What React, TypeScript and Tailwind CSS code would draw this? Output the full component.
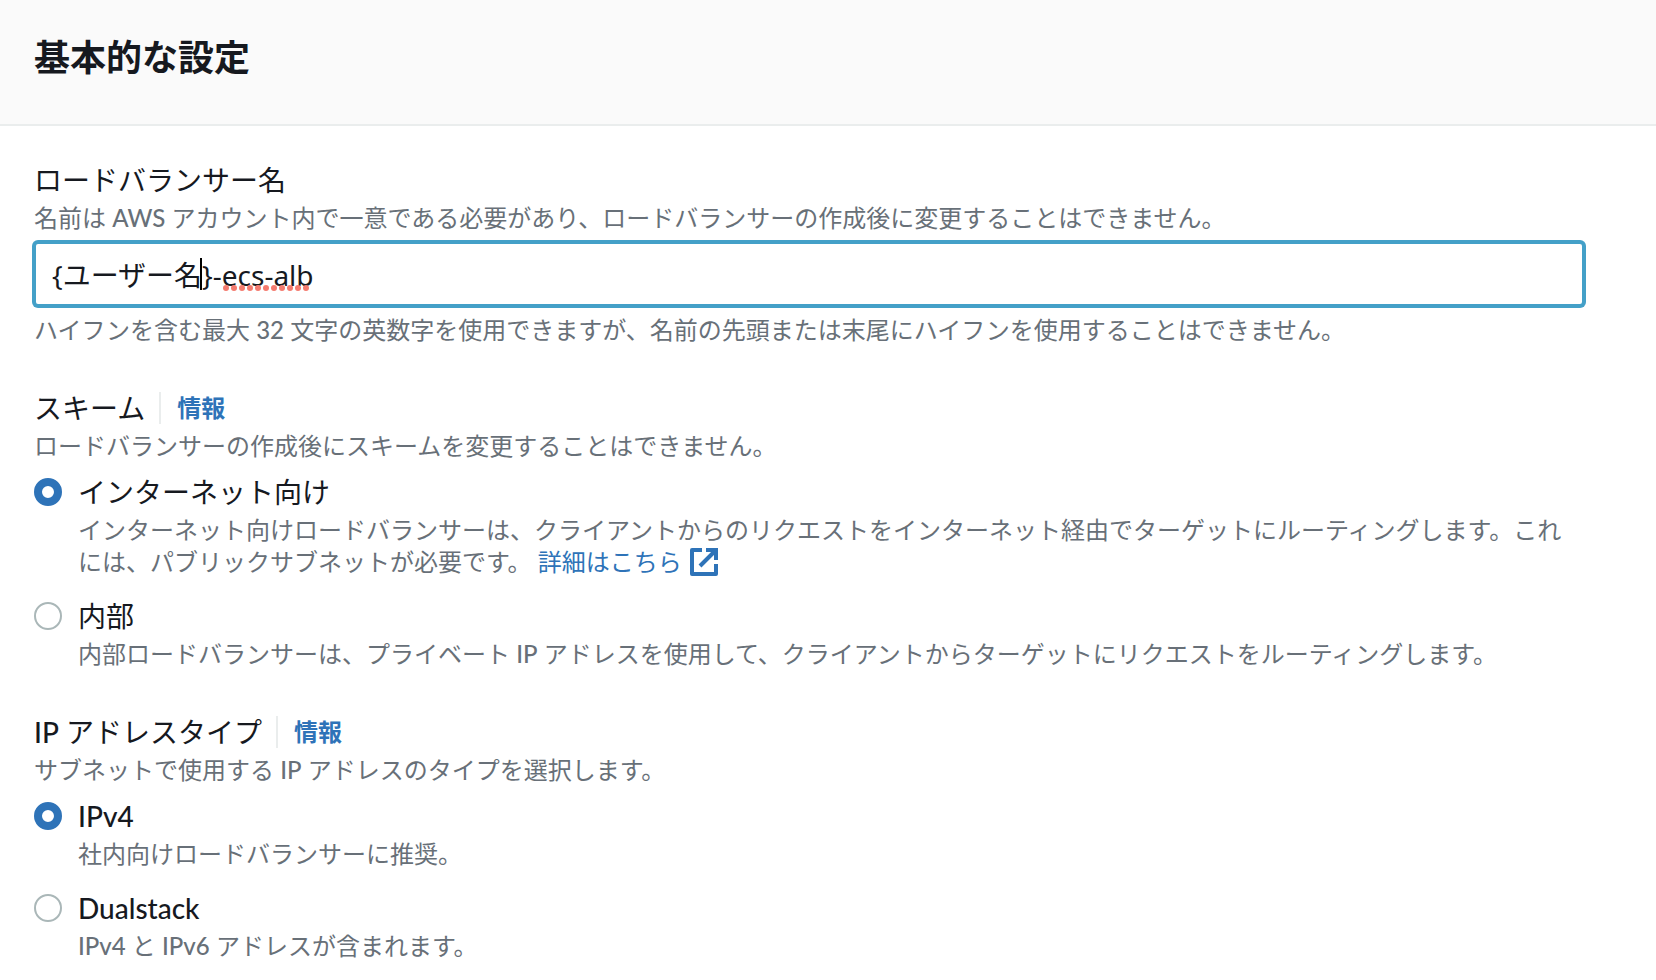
import React, { useState } from "react";

type RadioOption = {
  value: string;
  label: React.ReactNode;
  description: React.ReactNode;
};

// Latin runs are set one step heavier than the Japanese text around them
function Latin({ children }: { children: React.ReactNode }) {
  return <span className="font-medium">{children}</span>;
}

function ExternalIcon() {
  return (
    <svg viewBox="0 0 28 28" aria-hidden="true" className="inline-block w-7 h-7 my-0.5 ml-2 align-top" fill="none">
      <path d="M12 2H2V26H26V16" stroke="currentColor" strokeWidth="4" strokeLinejoin="round" />
      <path d="M16 2H26V12" stroke="currentColor" strokeWidth="4" />
      <path d="M10 18L25 3" stroke="currentColor" strokeWidth="4" />
    </svg>
  );
}

const schemeOptions: RadioOption[] = [
  {
    value: "internet-facing",
    label: "インターネット向け",
    description: (
      <>
        インターネット向けロードバランサーは、クライアントからのリクエストをインターネット経由でターゲットにルーティングします。これには、パブリックサブネットが必要です。{" "}
        <a href="#learn-more" className="text-[#2e73b8] whitespace-nowrap">
          詳細はこちら
          <ExternalIcon />
        </a>
      </>
    ),
  },
  {
    value: "internal",
    label: "内部",
    description: (
      <>
        内部ロードバランサーは、プライベート <Latin>IP</Latin>{" "}
        アドレスを使用して、クライアントからターゲットにリクエストをルーティングします。
      </>
    ),
  },
];

const ipOptions: RadioOption[] = [
  {
    value: "ipv4",
    label: <Latin>IPv4</Latin>,
    description: "社内向けロードバランサーに推奨。",
  },
  {
    value: "dualstack",
    label: <Latin>Dualstack</Latin>,
    description: (
      <>
        <Latin>IPv4</Latin> と <Latin>IPv6</Latin> アドレスが含まれます。
      </>
    ),
  },
];

function RadioField({
  name,
  title,
  hint,
  options,
  initial,
}: {
  name: string;
  title: React.ReactNode;
  hint: React.ReactNode;
  options: RadioOption[];
  initial: string;
}) {
  const [selected, setSelected] = useState(initial);

  return (
    <fieldset>
      <legend className="flex items-center text-[28px] leading-[44px] text-[#16191f]">
        <span>{title}</span>
        <span className="ml-3.5 h-8 border-l-2 border-[#eaeded] pl-4 flex items-center">
          <a href={`#${name}-info`} className="text-2xl leading-8 font-bold text-[#2e73b8]">
            情報
          </a>
        </span>
      </legend>
      <p className="text-2xl leading-8 text-[#687078]">{hint}</p>

      <div className="mt-2 space-y-4">
        {options.map((option) => (
          <div key={option.value} className="flex items-start gap-4">
            <input
              type="radio"
              id={`${name}-${option.value}`}
              name={name}
              checked={selected === option.value}
              onChange={() => setSelected(option.value)}
              className="appearance-none shrink-0 w-7 h-7 mt-2 rounded-full bg-white border-2 border-[#aab7b8] checked:border-8 checked:border-[#2e73b8]"
            />
            <div className="min-w-0">
              <label
                htmlFor={`${name}-${option.value}`}
                className="block text-[28px] leading-[44px] text-[#16191f]"
              >
                {option.label}
              </label>
              <p className="text-2xl leading-8 text-[#687078]">{option.description}</p>
            </div>
          </div>
        ))}
      </div>
    </fieldset>
  );
}

export default function App() {
  const [name, setName] = useState("{ユーザー名}-ecs-alb");

  return (
    <main className="min-h-screen bg-white font-['Lato','Noto_Sans_CJK_JP',sans-serif]">
      <header className="bg-[#fafafa] border-b-2 border-[#eaeded] px-[34px] pt-[35px] pb-[45px]">
        <h1 className="text-4xl leading-[44px] font-bold text-[#16191f]">基本的な設定</h1>
      </header>

      <form className="pl-[34px] pr-[72px] py-8 space-y-10">
        {/* Load balancer name */}
        <div>
          <label htmlFor="lb-name" className="block text-[28px] leading-[44px] text-[#16191f]">
            ロードバランサー名
          </label>
          <p className="text-2xl leading-8 text-[#687078]">
            名前は <Latin>AWS</Latin>{" "}
            アカウント内で一意である必要があり、ロードバランサーの作成後に変更することはできません。
          </p>
          <div className="relative my-2">
            <input
              id="lb-name"
              type="text"
              spellCheck={false}
              value={name}
              onChange={(e) => setName(e.target.value)}
              className="block w-full h-16 px-4 font-['Noto_Sans','Noto_Sans_CJK_JP',sans-serif] text-[28px] text-[#16191f] bg-white border-2 border-[#44a0c8] ring-2 ring-[#44a0c8] rounded-sm outline-none"
            />
            {/* Text cursor and spelling marks */}
            <span className="absolute left-[166px] top-4 w-0.5 h-8 bg-black pointer-events-none" />
            <svg
              viewBox="0 0 88 6"
              aria-hidden="true"
              className="absolute left-[189px] top-[43px] w-[88px] h-1.5 pointer-events-none"
            >
              <path
                d="M3 3H84"
                stroke="#f47b6f"
                strokeWidth="6"
                strokeLinecap="round"
                strokeDasharray="0 8"
              />
            </svg>
          </div>
          <p className="text-2xl leading-8 text-[#687078]">
            ハイフンを含む最大 <Latin>32</Latin>{" "}
            文字の英数字を使用できますが、名前の先頭または末尾にハイフンを使用することはできません。
          </p>
        </div>

        <RadioField
          name="scheme"
          title="スキーム"
          hint="ロードバランサーの作成後にスキームを変更することはできません。"
          options={schemeOptions}
          initial="internet-facing"
        />

        <RadioField
          name="ip-type"
          title={
            <>
              <Latin>IP</Latin> アドレスタイプ
            </>
          }
          hint={
            <>
              サブネットで使用する <Latin>IP</Latin> アドレスのタイプを選択します。
            </>
          }
          options={ipOptions}
          initial="ipv4"
        />
      </form>
    </main>
  );
}
